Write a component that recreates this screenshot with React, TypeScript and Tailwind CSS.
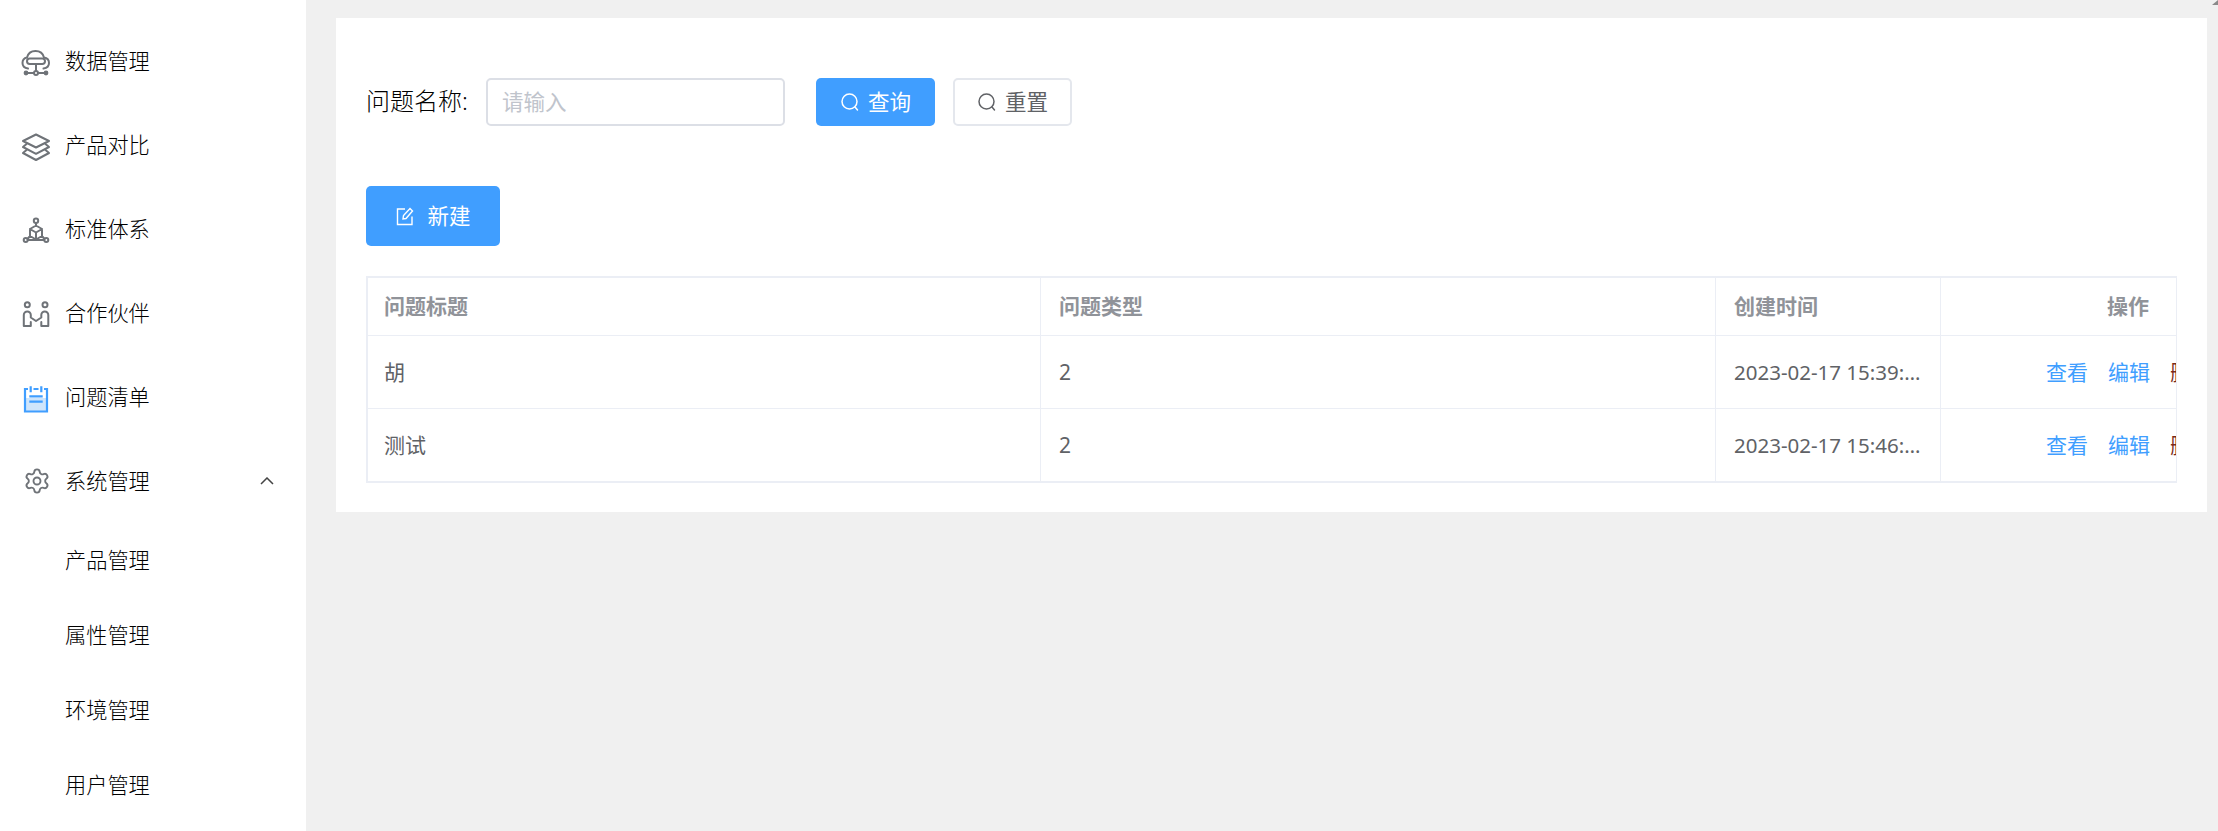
import React from "react";
import { Settings } from "lucide-react";

const FONT = "font-['Noto_Sans','Noto_Sans_CJK_SC',sans-serif]";

const stroke = { fill: "none", stroke: "#6f7378", strokeWidth: 2, strokeLinecap: "round" as const, strokeLinejoin: "round" as const };

function CloudIcon() {
  return (
    <svg className="translate-y-[3px]" width="30" height="30" viewBox="0 0 30 30" {...stroke}>
      <path d="M7 19.5C3.5 19 1.5 16.5 1.5 14C1.5 11 3.5 9 6 8.5C7 4.5 10.5 2 14.5 2C18.5 2 22 4.5 23 8.5C26 9 28 11 28 14C28 16.5 26 19 22.5 19.5" />
      <rect x="6" y="9.5" width="18" height="5.5" rx="2.7" />
      <path d="M15 15V22M5 24H26" />
      <circle cx="5" cy="24" r="1.4" fill="#6f7378" />
      <circle cx="15" cy="24" r="2" fill="#fff" />
      <circle cx="25" cy="24" r="1.4" fill="#6f7378" />
    </svg>
  );
}
function LayersIcon() {
  return (
    <svg className="translate-y-[3px]" width="30" height="30" viewBox="0 0 30 30" {...stroke}>
      <path d="M15 1.5L28 8L15 14.5L2 8Z" />
      <path d="M5.5 11L2 14L15 20.8L28 14L24.5 11" />
      <path d="M5.5 17L2 20L15 27L28 20L24.5 17" />
    </svg>
  );
}
function CubeIcon() {
  return (
    <svg className="translate-y-[3px]" width="30" height="30" viewBox="0 0 30 30" {...stroke}>
      <circle cx="15" cy="3.7" r="2.2" />
      <circle cx="4.7" cy="23" r="2" />
      <circle cx="25.3" cy="23" r="2" />
      <path d="M15 6V8.5L21 12V19L15 22.5L9 19V12L15 8.5M9 12L15 15.5L21 12M15 15.5V22.5M9 19L6.5 22M21 19L23.5 22M6.8 23H23.2" />
    </svg>
  );
}
function PartnerIcon() {
  return (
    <svg width="30" height="30" viewBox="0 0 30 30" {...stroke}>
      <circle cx="6.3" cy="6.7" r="2.5" />
      <circle cx="24" cy="6.7" r="2.5" />
      <path d="M2.8 28V17a3.5 3.5 0 0 1 7 0V19.5L15 23L20.3 19.5V17a3.5 3.5 0 0 1 7 0V28H20.3V24M9.8 24V28H2.8" />
    </svg>
  );
}
function ClipboardIcon() {
  return (
    <svg className="translate-y-[2px]" width="30" height="30" viewBox="0 0 30 30" fill="none" stroke="#409eff" strokeWidth="2.2">
      <rect x="4" y="14" width="22" height="13" fill="#cfe5fb" stroke="none" />
      <path d="M7 5H4V27.5H26V5H23M12.5 5H17.5" />
      <path d="M9.7 2.3V8.3M20.3 2.3V8.3M8.3 12.3H21.7M8.3 17.7H21.7" />
    </svg>
  );
}
function SearchIcon({ color }: { color: string }) {
  return (
    <svg width="20" height="20" viewBox="0 0 20 20" fill="none" stroke={color} strokeWidth="1.5" strokeLinecap="round">
      <circle cx="9.5" cy="9.5" r="7.5" />
      <path d="M15 15L17.5 18" />
    </svg>
  );
}
function EditIcon() {
  return (
    <svg width="20" height="20" viewBox="0 0 20 20" fill="none" stroke="#fff" strokeWidth="1.4">
      <path d="M10 3H2.5V18.5H17V10.5" />
      <path d="M8 13L8.5 9.5L15 2.5L17.5 5L11 12.5Z" />
    </svg>
  );
}

const items: [string, React.ReactNode][] = [
  ["数据管理", <CloudIcon />],
  ["产品对比", <LayersIcon />],
  ["标准体系", <CubeIcon />],
  ["合作伙伴", <PartnerIcon />],
  ["问题清单", <ClipboardIcon />],
];
const subs = ["产品管理", "属性管理", "环境管理", "用户管理"];
const rows = [
  ["胡", "2", "2023-02-17 15:39:42"],
  ["测试", "2", "2023-02-17 15:46:10"],
];

export default function App() {
  return (
    <div className={`relative flex h-[831px] w-[2218px] overflow-hidden bg-[#f0f0f0] ${FONT}`}>
      <aside className="w-[306px] shrink-0 bg-white pt-[19px] text-[21.2px] font-light leading-none text-black">
        {items.map(([label, icon]) => (
          <div key={label} className="flex h-[84px] items-center pl-[21px]">
            <span className="flex w-[44px] shrink-0">{icon}</span>
            {label}
          </div>
        ))}
        <div className="flex h-[83px] items-center pl-[21px]">
          <span className="flex w-[44px] shrink-0 pl-[2px]">
            <Settings size={28} color="#6f7378" strokeWidth={1.6} />
          </span>
          系统管理
          <svg className="ml-auto mr-[32px]" width="14" height="8" viewBox="0 0 14 8" fill="none" stroke="#444" strokeWidth="1.5">
            <path d="M1 7L7 1L13 7" />
          </svg>
        </div>
        {subs.map((s) => (
          <div key={s} className="flex h-[75px] items-center pl-[65px]">
            {s}
          </div>
        ))}
      </aside>
      <main className="flex-1 pl-[30px] pt-[18px]">
        <section className="w-[1871px] bg-white pb-[29px] pl-[30px] pt-[60px]">
          <div className="flex h-[48px] items-center">
            <label className="mb-[3px] w-[120px] shrink-0 text-[24px] font-light leading-none text-black">问题名称:</label>
            <div className="flex h-[48px] w-[299px] items-center rounded-[5px] border-2 border-[#dcdfe6] pl-[14px] text-[21.5px] text-[#c0c4cc]">
              请输入
            </div>
            <button className="ml-[31px] flex h-[48px] w-[119px] items-center justify-center gap-[8px] rounded-[5px] bg-[#409eff] text-[21.5px] text-white">
              <SearchIcon color="#fff" />
              查询
            </button>
            <button className="ml-[18px] flex h-[48px] w-[119px] items-center justify-center gap-[8px] rounded-[5px] border-2 border-[#e4e7ed] bg-white text-[21.5px] text-[#606266]">
              <SearchIcon color="#606266" />
              重置
            </button>
          </div>
          <button className="mt-[60px] flex h-[60px] w-[134px] items-center justify-center gap-[12px] rounded-[5px] bg-[#409eff] text-[21.5px] text-white">
            <EditIcon />
            新建
          </button>
          <div className="mt-[30px] w-[1811px] overflow-hidden border-2 border-r border-[#ebeef5]">
            <table className="w-[1811px] table-fixed border-separate border-spacing-0 text-[21px] leading-none text-[#606266]">
              <colgroup>
                <col className="w-[673px]" />
                <col className="w-[675px]" />
                <col className="w-[225px]" />
                <col className="w-[238px]" />
              </colgroup>
              <thead>
                <tr className="h-[58px] font-bold text-[#909399]">
                  <th className="border-r border-b border-[#ebeef5] pl-[16px] text-left">问题标题</th>
                  <th className="border-r border-b border-[#ebeef5] pl-[18px] text-left">问题类型</th>
                  <th className="border-r border-b border-[#ebeef5] pl-[18px] text-left">创建时间</th>
                  <th className="border-b border-[#ebeef5] pl-[166px] text-left whitespace-nowrap">操作</th>
                </tr>
              </thead>
              <tbody>
                {rows.map((r, i) => (
                  <tr key={i} className={i === 0 ? "h-[73px]" : "h-[72px]"}>
                    <td className={`border-r border-[#ebeef5] pl-[16px] ${i === 0 ? "border-b" : ""}`}>{r[0]}</td>
                    <td className={`border-r border-[#ebeef5] pl-[18px] ${i === 0 ? "border-b" : ""}`}>{r[1]}</td>
                    <td className={`border-r border-[#ebeef5] pl-[18px] pr-[19px] text-[20.5px] ${i === 0 ? "border-b" : ""}`}>
                      <div className="truncate">{r[2]}</div>
                    </td>
                    <td className={`border-[#ebeef5] pl-[105px] ${i === 0 ? "border-b" : ""}`}>
                      <div className="flex gap-[20px] whitespace-nowrap">
                        <span className="text-[#409eff]">查看</span>
                        <span className="text-[#409eff]">编辑</span>
                        <span className="text-[#7a2a1a]">删除</span>
                      </div>
                    </td>
                  </tr>
                ))}
              </tbody>
            </table>
          </div>
        </section>
      </main>
      <svg className="absolute right-0 top-0" width="6" height="5" viewBox="0 0 6 5">
        <path d="M6 0V5H0Z" fill="#8a8a8a" />
      </svg>
    </div>
  );
}
